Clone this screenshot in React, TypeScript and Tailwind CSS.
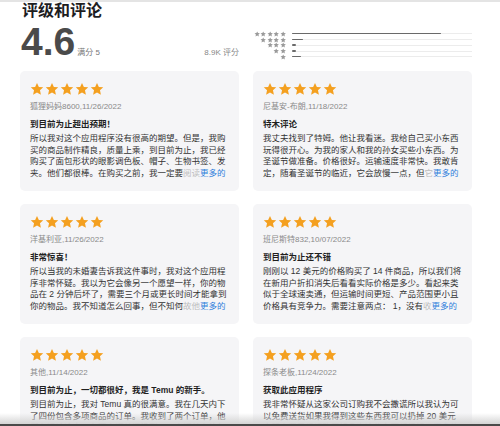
import React from 'react';

type Review = {
  author: string;
  title: string;
  body: string;
  fade: string;
};

const reviews: Review[] = [
  {
    author: '狐狸妈妈8600,11/26/2022',
    title: '到目前为止超出预期！',
    body: '所以我对这个应用程序没有很高的期望。但是，我购买的商品制作精良，质量上乘，到目前为止，我已经购买了面包形状的眼影调色板、帽子、生物书签、发夹。他们都很棒。在购买之前，我一定要',
    fade: '阅读',
  },
  {
    author: '尼基安-布朗,11/18/2022',
    title: '特木评论',
    body: '我丈夫找到了特姆。他让我看迷。我给自己买小东西玩得很开心。为我的家人和我的孙女买些小东西。为圣诞节做准备。价格很好。运输速度非常快。我敢肯定，随着圣诞节的临近，它会放慢一点，但',
    fade: '它',
  },
  {
    author: '洋基利亚,11/26/2022',
    title: '非常惊喜！',
    body: '所以当我的未婚妻告诉我这件事时，我对这个应用程序非常怀疑。我以为它会像另一个愿望一样，你的物品在 2 分钟后坏了，需要三个月或更长时间才能拿到你的物品。我不知道怎么回事，但不知何',
    fade: '故他',
  },
  {
    author: '班尼斯特832,10/07/2022',
    title: '到目前为止还不错',
    body: '刚刚以 12 美元的价格购买了 14 件商品，所以我们将在新用户折扣消失后看看实际价格是多少。看起来类似于全球速卖通，但运输时间更短、产品范围更小且价格具有竞争力。需要注意两点： 1，没有',
    fade: '收',
  },
  {
    author: '其他,11/14/2022',
    title: '到目前为止，一切都很好，我是 Temu 的新手。',
    body: '到目前为止，我对 Temu 真的很满意。我在几天内下了四份包含多项商品的订单。我收到了两个订单，他们在运输途中，有两个订单还没到。一个订单上的包',
    fade: '裹',
  },
  {
    author: '探条老板,11/24/2022',
    title: '获取此应用程序',
    body: '我非常怀疑从这家公司订购我不会撒谎所以我认为可以免费送货如果我得到这些东西我可以扔掉 20 美元实际上我已经订购了好几次这些东西都很好',
    fade: '用',
  },
];

const histogram = [
  { stars: 5, pct: 83 },
  { stars: 4, pct: 6 },
  { stars: 3, pct: 2 },
  { stars: 2, pct: 2 },
  { stars: 1, pct: 5 },
];

const Star: React.FC<{ className: string }> = ({ className }) => (
  <svg viewBox="0 0 24 24" className={className}>
    <path
      fill="currentColor"
      d="M12 1.5l3.2 6.9 7.5.8-5.6 5.1 1.6 7.4L12 17.9l-6.7 3.8 1.6-7.4-5.6-5.1 7.5-.8z"
    />
  </svg>
);

const ReviewCard: React.FC<{ review: Review }> = ({ review }) => (
  <div className="rounded-[5px] bg-[#f5f5f7] px-[10px] pt-[11px] pb-[12px]">
    <div className="flex h-[13px] gap-[1px] text-[#f4a020]">
      {[0, 1, 2, 3, 4].map((i) => (
        <Star key={i} className="h-[14px] w-[14px]" />
      ))}
    </div>
    <div className="mt-[5.5px] text-[8px] leading-[11px] text-[#8a8a8a]">{review.author}</div>
    <div className="mt-[6.5px] text-[8.5px] font-bold leading-[12px] text-[#1f1f1f]">{review.title}</div>
    <p className="mt-[3px] break-all text-[8.5px] leading-[11.5px] text-[#333]">
      {review.body}
      <span className="text-[#bdbdbd]">{review.fade}</span>
      <span className="text-[#2f7fdc]">更多的</span>
    </p>
  </div>
);

const App: React.FC = () => {
  return (
    <div className="relative h-[426px] overflow-hidden border-t-2 border-[#e4e4e4] bg-white font-['Liberation_Sans','Noto_Sans_CJK_SC',sans-serif]">
      <div className="pl-[20px] pr-[28px]">
        {/* Summary */}
        <div className="grid grid-cols-2 gap-x-[14px]">
          <div>
            <h1 className="pl-[2px] text-[16px] font-bold leading-[18px] text-[#1d1d1f]">评级和评论</h1>
            <div className="mt-[3px] flex items-end justify-between pl-[1px]">
              <div className="flex items-end">
                <span className="text-[39px] font-bold leading-[38px] text-[#4a4a4a]">4.6</span>
                <span className="mb-[3px] ml-[2px] text-[8px] leading-[10px] text-[#777]">满分 5</span>
              </div>
              <span className="mb-[3px] text-[8px] leading-[10px] text-[#888]">8.9K 评分</span>
            </div>
          </div>

          <div className="flex flex-col pt-[29px]">
            {histogram.map((row) => (
              <div key={row.stars} className="flex h-[5.75px] items-center">
                <div className="flex w-[33px] justify-end text-[#9a9a9a]">
                  {Array.from({ length: row.stars }).map((_, i) => (
                    <Star key={i} className="h-[6px] w-[6.4px]" />
                  ))}
                </div>
                <div className="relative ml-[6px] h-[1px] flex-1 bg-[#ececec]">
                  <div
                    className="absolute top-[-0.5px] left-0 h-[1.5px] rounded-full bg-[#6a6a6a]"
                    style={{ width: `${row.pct}%` }}
                  />
                </div>
              </div>
            ))}
          </div>
        </div>

        {/* Reviews */}
        <div className="mt-[10px] grid grid-cols-2 gap-x-[14px] gap-y-[13px]">
          {reviews.map((r) => (
            <ReviewCard key={r.author} review={r} />
          ))}
        </div>
      </div>

      {/* bottom edge shadow */}
      <div className="absolute inset-x-0 bottom-[2px] h-[11px] bg-linear-to-b from-transparent to-[#d4d4d4]" />
      <div className="absolute inset-x-0 bottom-0 h-[2px] bg-[#4a4a4a]" />
    </div>
  );
};

export default App;
